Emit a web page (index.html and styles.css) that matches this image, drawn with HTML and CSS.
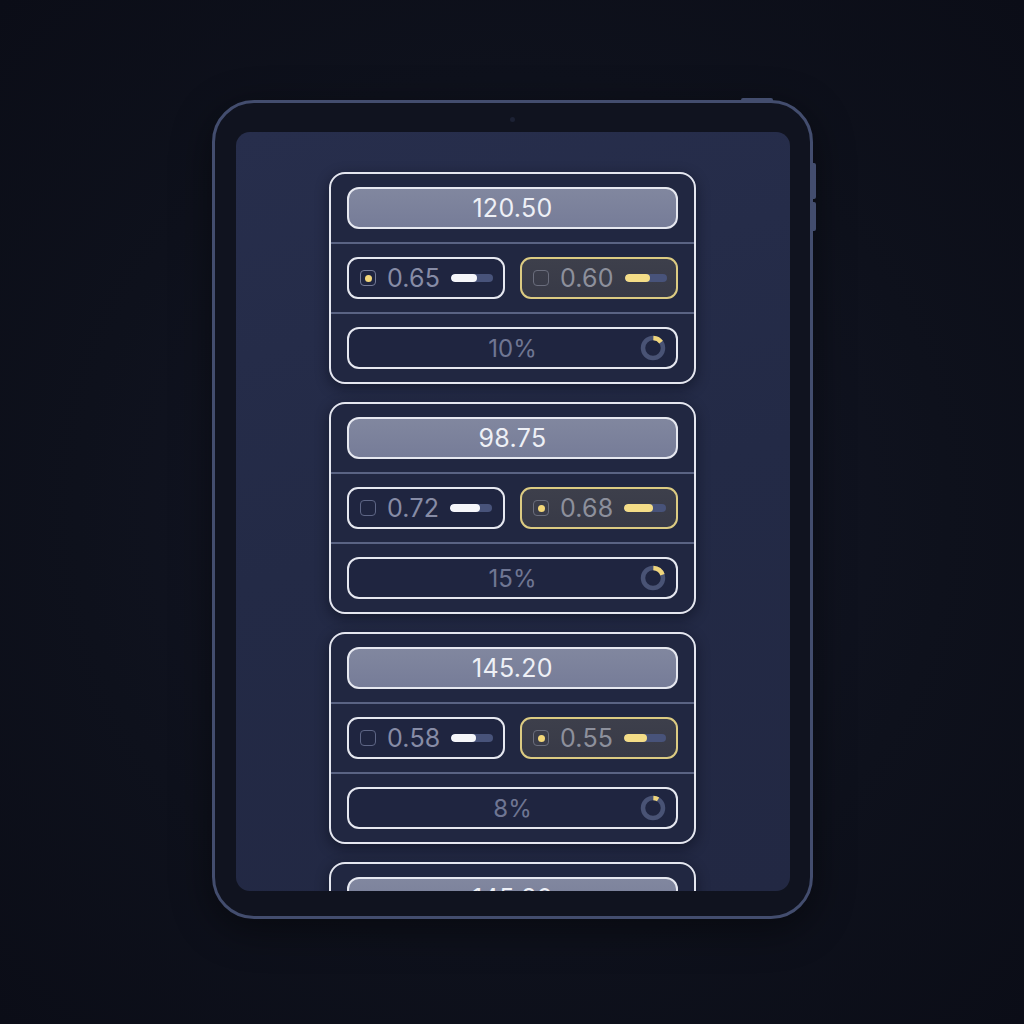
FILE: index.html
```html
<!DOCTYPE html>
<html>
<head>
<meta charset="utf-8">
<link rel="stylesheet" href="styles.css">
</head>
<body>
<div class="stage">
  <div class="tablet">
    <span class="btn-top"></span>
    <span class="btn-side b1"></span>
    <span class="btn-side b2"></span>
    <span class="camera"></span>
    <div class="screen">

      <div class="card">
        <div class="sec"><div class="value-pill">120.50</div></div>
        <div class="sec row">
          <div class="chip">
            <span class="check on-light"><span class="dot"></span></span>
            <span class="num">0.65</span>
            <span class="bar"><span class="fill" style="width:62%"></span></span>
          </div>
          <div class="chip gold">
            <span class="check"></span>
            <span class="num">0.60</span>
            <span class="bar"><span class="fill" style="width:60%"></span></span>
          </div>
        </div>
        <div class="sec">
          <div class="pct-pill">
            <span class="pct">10%</span>
            <svg class="ring" viewBox="0 0 26 26"><circle cx="13" cy="13" r="10" class="track"/><circle cx="13" cy="13" r="10" class="arc" stroke-dasharray="9 70" transform="rotate(-88 13 13)"/></svg>
          </div>
        </div>
      </div>

      <div class="card">
        <div class="sec"><div class="value-pill">98.75</div></div>
        <div class="sec row">
          <div class="chip">
            <span class="check"></span>
            <span class="num">0.72</span>
            <span class="bar"><span class="fill" style="width:71%"></span></span>
          </div>
          <div class="chip gold">
            <span class="check"><span class="dot"></span></span>
            <span class="num">0.68</span>
            <span class="bar"><span class="fill" style="width:68%"></span></span>
          </div>
        </div>
        <div class="sec">
          <div class="pct-pill">
            <span class="pct">15%</span>
            <svg class="ring" viewBox="0 0 26 26"><circle cx="13" cy="13" r="10" class="track"/><circle cx="13" cy="13" r="10" class="arc" stroke-dasharray="12 70" transform="rotate(-88 13 13)"/></svg>
          </div>
        </div>
      </div>

      <div class="card">
        <div class="sec"><div class="value-pill">145.20</div></div>
        <div class="sec row">
          <div class="chip">
            <span class="check"></span>
            <span class="num">0.58</span>
            <span class="bar"><span class="fill" style="width:58%"></span></span>
          </div>
          <div class="chip gold">
            <span class="check"><span class="dot"></span></span>
            <span class="num">0.55</span>
            <span class="bar"><span class="fill" style="width:55%"></span></span>
          </div>
        </div>
        <div class="sec">
          <div class="pct-pill">
            <span class="pct">8%</span>
            <svg class="ring" viewBox="0 0 26 26"><circle cx="13" cy="13" r="10" class="track"/><circle cx="13" cy="13" r="10" class="arc" stroke-dasharray="5 70" transform="rotate(-88 13 13)"/></svg>
          </div>
        </div>
      </div>

      <div class="card">
        <div class="sec"><div class="value-pill">145.20</div></div>
      </div>

    </div>
  </div>
</div>
</body>
</html>
```

FILE: styles.css
```css
* { box-sizing: border-box; }
html, body { margin: 0; padding: 0; }
body {
  width: 1024px;
  height: 1024px;
  overflow: hidden;
  background: radial-gradient(ellipse at 50% 50%, #141727 0%, #0e111c 60%, #0b0d17 100%);
  font-family: Inter, "Noto Sans", sans-serif;
}
.stage {
  display: flex;
  justify-content: center;
  padding-top: 100px;
}
.tablet {
  position: relative;
  width: 601px;
  height: 819px;
  border: 3px solid #434d6e;
  border-radius: 42px;
  background: #10131f;
  padding: 29px 20px 25px 21px;
  box-shadow: 0 10px 40px rgba(0,0,0,0.45);
}
.btn-top {
  position: absolute;
  top: -5px;
  left: 526px;
  width: 32px;
  height: 3px;
  border-radius: 2px 2px 0 0;
  background: #434d6e;
}
.btn-side {
  position: absolute;
  right: -6px;
  width: 3px;
  border-radius: 0 2px 2px 0;
  background: #434d6e;
}
.btn-side.b1 { top: 60px; height: 36px; }
.btn-side.b2 { top: 99px; height: 29px; }
.camera {
  position: absolute;
  top: 14px;
  left: 295px;
  width: 5px;
  height: 5px;
  border-radius: 50%;
  background: #1c2134;
}
.screen {
  height: 759px;
  border-radius: 14px;
  overflow: hidden;
  background: linear-gradient(165deg, #272e4c 0%, #232a46 50%, #222843 100%);
  padding-top: 40px;
  display: flex;
  flex-direction: column;
  align-items: center;
  gap: 18px;
}
.card {
  flex: none;
  width: 367px;
  border: 2px solid #e4e6ef;
  border-radius: 16px;
  background: #212741;
  box-shadow: 0 4px 14px rgba(5,7,15,0.45);
}
.sec {
  padding: 13px 16px;
}
.sec + .sec {
  border-top: 2px solid #5a6383;
}
.value-pill {
  height: 42px;
  border: 2px solid #e6e8f0;
  border-radius: 12px;
  background: linear-gradient(180deg, #81879f 0%, #767c98 100%);
  display: flex;
  align-items: center;
  justify-content: center;
  color: #eef0f6;
  font-size: 25px;
  font-weight: 400;
  letter-spacing: 0.3px;
}
.row {
  display: flex;
  gap: 15px;
}
.chip {
  flex: 1 1 0;
  min-width: 0;
  height: 42px;
  border: 2px solid #e6e8f0;
  border-radius: 11px;
  background: #1f2540;
  display: flex;
  align-items: center;
  padding: 0 8px 0 11px;
  gap: 11px;
}
.chip.gold {
  border-color: #dccb82;
  background: linear-gradient(180deg, #3d3f4b 0%, #383a47 100%);
}
.check {
  flex: none;
  width: 16px;
  height: 16px;
  border: 1.5px solid #5e6686;
  border-radius: 4px;
  display: flex;
  align-items: center;
  justify-content: center;
}
.check.on-light { border-color: #737a96; }
.chip.gold .check { border-color: #6a6d7c; }
.dot {
  width: 7px;
  height: 7px;
  border-radius: 50%;
  background: #f3d779;
}
.num {
  font-size: 25px;
  color: #878ca6;
  letter-spacing: 0.2px;
}
.chip.gold .num { color: #8d909c; }
.bar {
  flex: none;
  width: 42px;
  height: 8px;
  border-radius: 4px;
  background: #48537a;
  overflow: hidden;
  display: flex;
}
.fill {
  height: 100%;
  border-radius: 4px;
  background: #f5f6fa;
}
.chip.gold .fill { background: #f3dc87; }
.pct-pill {
  position: relative;
  height: 42px;
  border: 2px solid #e6e8f0;
  border-radius: 12px;
  background: #1f2540;
  display: flex;
  align-items: center;
  justify-content: center;
}
.pct {
  font-size: 24px;
  color: #6f7693;
}
.ring {
  position: absolute;
  right: 10px;
  top: 6px;
  width: 26px;
  height: 26px;
}
.ring .track {
  fill: none;
  stroke: #495375;
  stroke-width: 4.5;
}
.ring .arc {
  fill: none;
  stroke: #f0d57b;
  stroke-width: 4.5;
}
```
